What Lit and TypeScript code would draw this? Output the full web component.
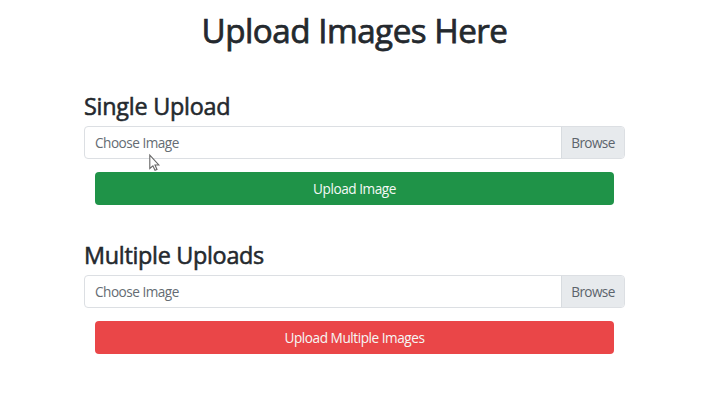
import { LitElement, html, css } from "lit";
import { customElement, property } from "lit/decorators.js";

@customElement("upload-section")
class UploadSection extends LitElement {
  @property() heading = "";
  @property() action = "";
  @property() variant = "single";

  static styles = css`
    :host { display: block; }
    .heading { margin: 0 0 6px; height: 27px; font-size: 23.4px; line-height: 27px; font-weight: 400; -webkit-text-stroke: 0.55px currentColor; white-space: nowrap; }
    .single-title { letter-spacing: -0.25px; }
    .multiple-title { letter-spacing: -0.3px; }
    .field { box-sizing: border-box; display: flex; height: 33px; border: 1px solid #dcdfe3; border-radius: 4px; overflow: hidden; font-size: 13.6px; line-height: 32px; }
    .name { flex: 1; padding-left: 10px; color: #656c73; letter-spacing: -0.5px; }
    .browse { box-sizing: border-box; width: 63px; border-left: 1px solid #d8dce0; background: #e7eaed; color: #5c646c; text-align: center; letter-spacing: -0.6px; }
    .button { display: block; width: calc(100% - 22px); height: 33px; margin: 13px 11px 0; padding: 0; border: 0; border-radius: 4px; color: #f5f8f6; font: inherit; font-size: 13.6px; line-height: 33px; letter-spacing: -0.45px; }
    .single { background: #1f9348; }
    .multiple { background: #ea4648; }
  `;

  render() {
    return html`
      <h3 class="heading ${this.variant}-title">${this.heading}</h3>
      <div class="field"><div class="name">Choose Image</div><div class="browse">Browse</div></div>
      <button class="button ${this.variant}">${this.action}</button>
    `;
  }
}

@customElement("app-root")
class AppRoot extends LitElement {
  static styles = css`
    :host { display: block; position: relative; box-sizing: border-box; height: 402px; overflow: hidden; background: #fff; color: #24292e; font-family: "Open Sans", "Noto Sans", sans-serif; }
    .title { margin: 0; padding: 11px 0 0 8px; height: 40px; text-align: center; font-size: 33.2px; line-height: 40px; font-weight: 400; -webkit-text-stroke: 0.75px currentColor; letter-spacing: -0.5px; }
    .sections { display: grid; gap: 37px; width: 541px; margin: 42px 0 0 84px; }
    .cursor { position: absolute; left: 148px; top: 153px; }
  `;

  render() {
    return html`
      <h1 class="title">Upload Images Here</h1>
      <div class="sections">
        <upload-section heading="Single Upload" action="Upload Image" variant="single"></upload-section>
        <upload-section heading="Multiple Uploads" action="Upload Multiple Images" variant="multiple"></upload-section>
      </div>
      <svg class="cursor" width="13" height="20" viewBox="0 0 13 20">
        <path d="M1.8 2.2V15.5L4.9 12.8L7 17.3L9 16.4L7 12H10.8Z" fill="#fff" stroke="#666" stroke-width="1.1" />
      </svg>
    `;
  }
}
